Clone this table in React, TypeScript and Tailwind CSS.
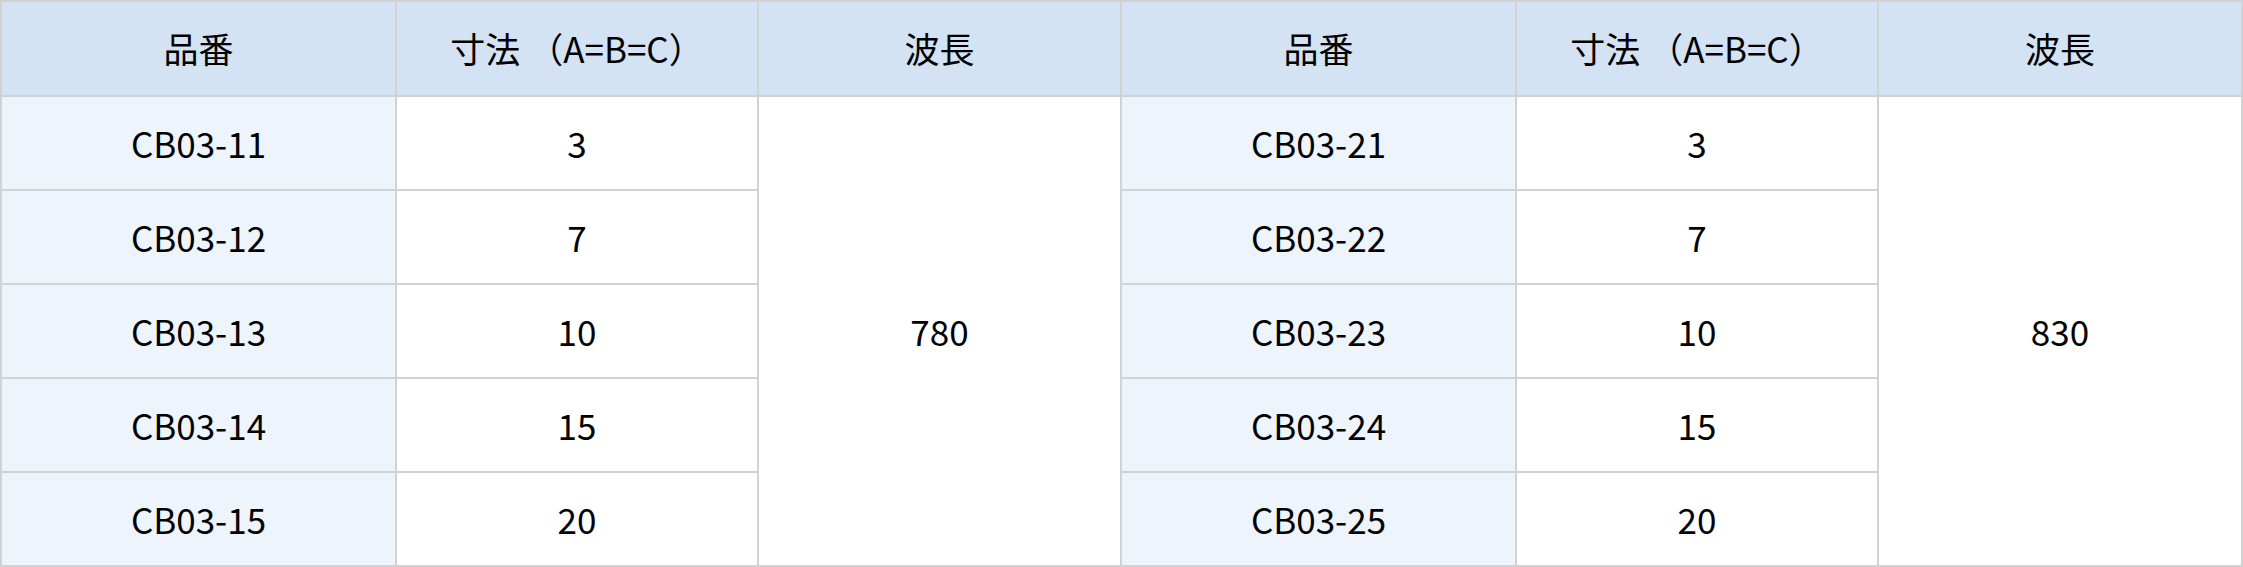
import { Fragment } from 'react';

const groups = [
  {
    rows: ['CB03-11', 'CB03-12', 'CB03-13', 'CB03-14', 'CB03-15'],
    wave: '780',
    cols: 'grid-cols-[393px_360px_361px]',
  },
  {
    rows: ['CB03-21', 'CB03-22', 'CB03-23', 'CB03-24', 'CB03-25'],
    wave: '830',
    cols: 'grid-cols-[393px_360px_362px]',
  },
];
const sizes = ['3', '7', '10', '15', '20'];

const cell = 'flex items-center justify-center';
const head = `${cell} bg-[#d3e3f3]`;

export default function App() {
  return (
    <div className="flex w-[2243px] h-[567px] gap-[2px] p-[2px] bg-[#d2d2d2] text-[35px] text-black font-['Noto_Sans_CJK_JP','Noto_Sans',sans-serif]">
      {groups.map((g) => (
        <div
          key={g.wave}
          className={`grid ${g.cols} grid-rows-[93px_92px_92px_92px_92px_92px] gap-[2px]`}
        >
          <div className={head}>品番</div>
          <div className={head}>寸法 （A=B=C）</div>
          <div className={head}>波長</div>

          {/* wavelength spans all five rows */}
          <div className={`${cell} bg-white col-start-3 row-start-2 row-span-5`}>{g.wave}</div>

          {g.rows.map((code, i) => (
            <Fragment key={code}>
              <div className={`${cell} bg-[#edf4fb] col-start-1`}>{code}</div>
              <div className={`${cell} bg-white col-start-2`}>{sizes[i]}</div>
            </Fragment>
          ))}
        </div>
      ))}
    </div>
  );
}
